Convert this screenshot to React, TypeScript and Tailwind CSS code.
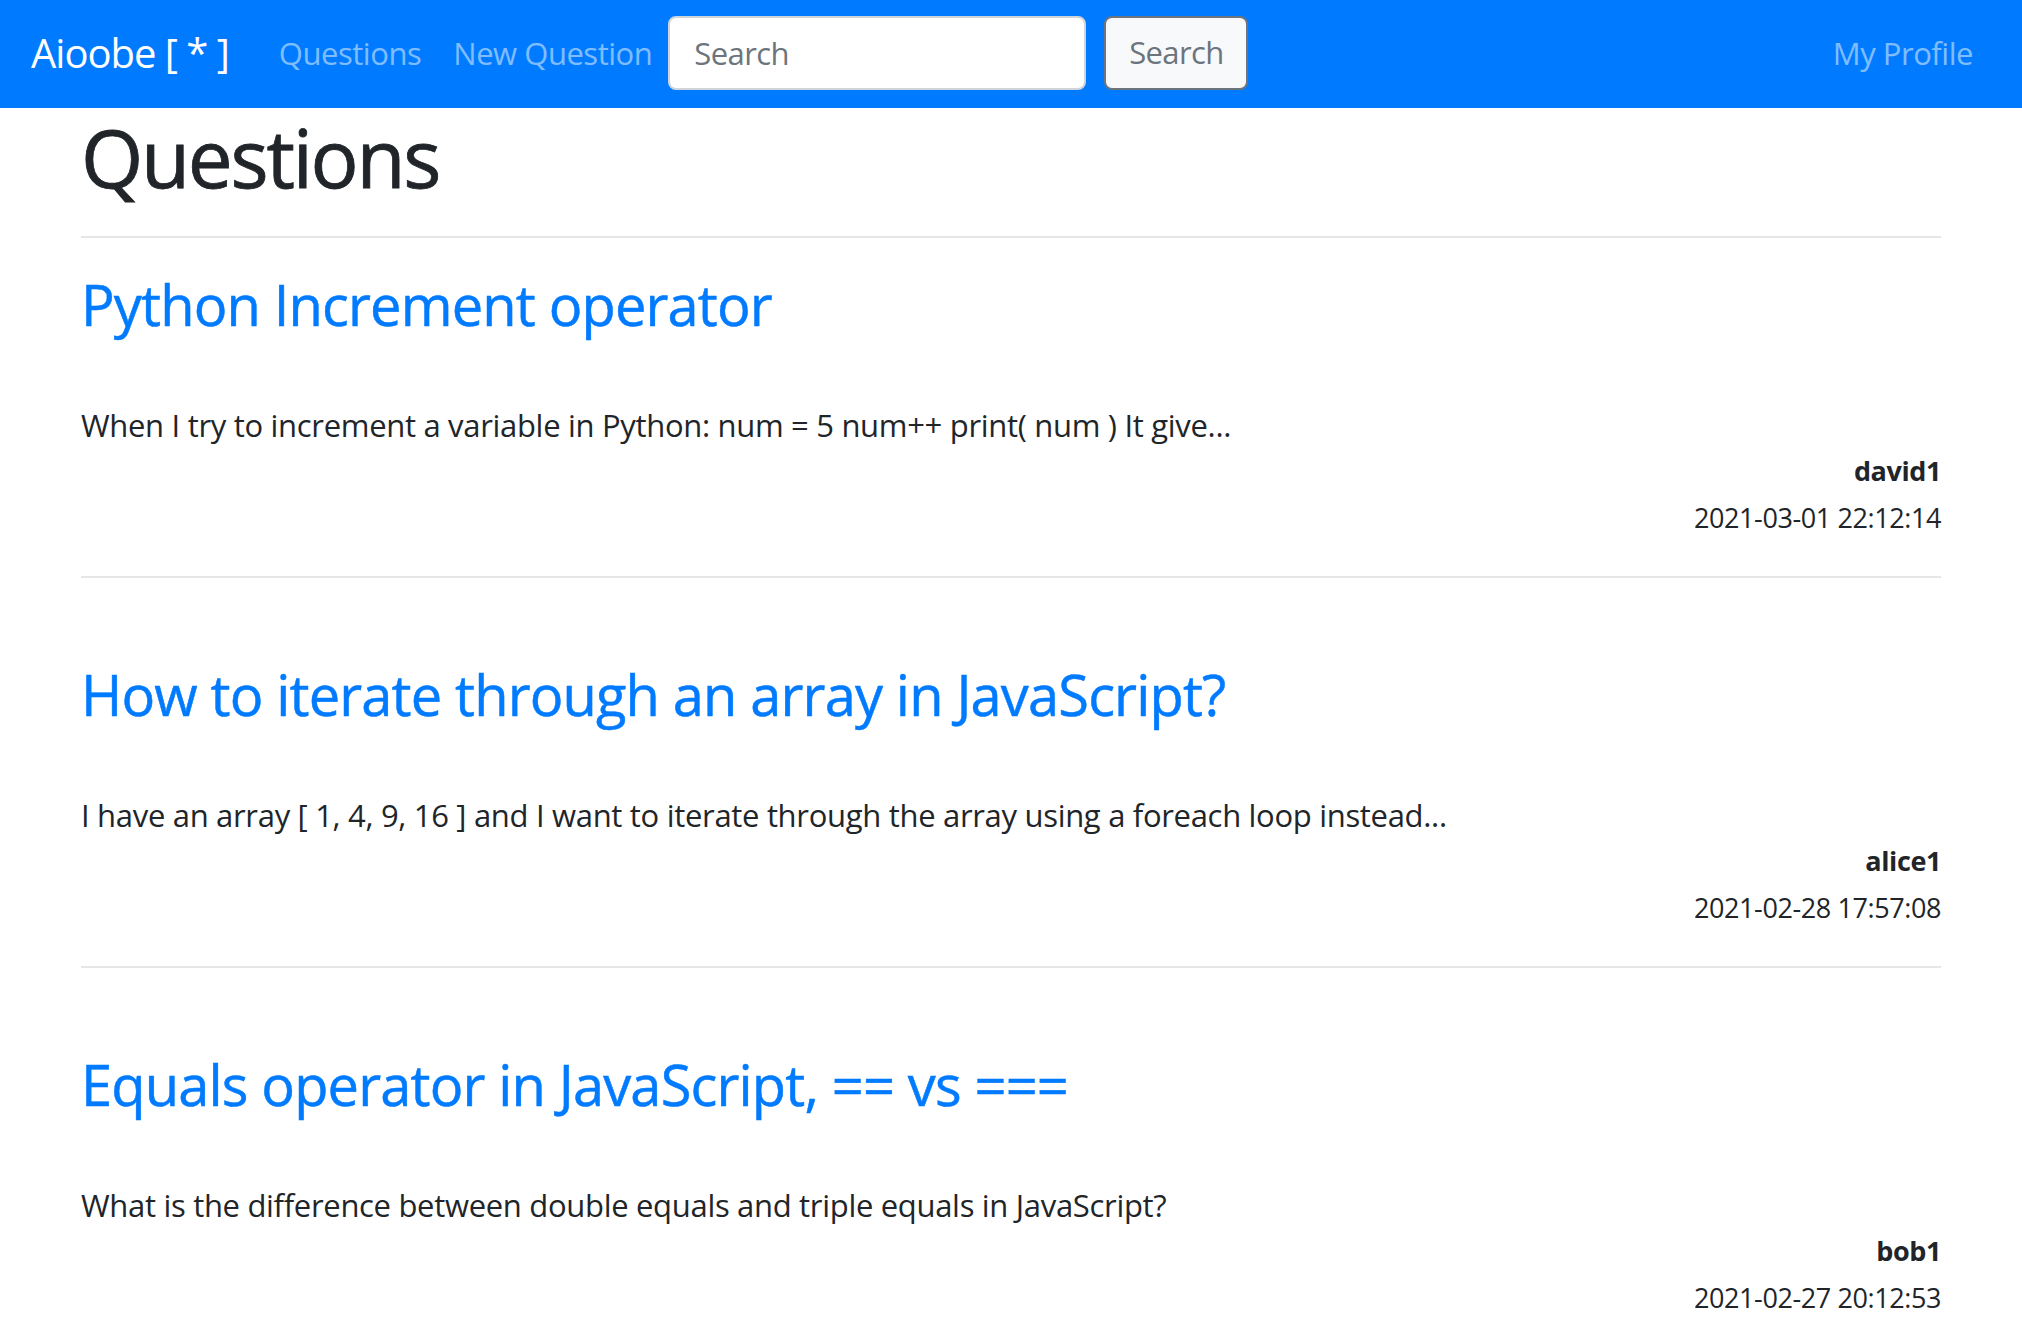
import React from "react";

type Question = {
  title: string;
  excerpt: string;
  author: string;
  date: string;
};

const questions: Question[] = [
  {
    title: "Python Increment operator",
    excerpt:
      "When I try to increment a variable in Python: num = 5 num++ print( num ) It give...",
    author: "david1",
    date: "2021-03-01 22:12:14",
  },
  {
    title: "How to iterate through an array in JavaScript?",
    excerpt:
      "I have an array [ 1, 4, 9, 16 ] and I want to iterate through the array using a foreach loop instead...",
    author: "alice1",
    date: "2021-02-28 17:57:08",
  },
  {
    title: "Equals operator in JavaScript, == vs ===",
    excerpt: "What is the difference between double equals and triple equals in JavaScript?",
    author: "bob1",
    date: "2021-02-27 20:12:53",
  },
];

function Navbar() {
  return (
    <nav className="flex h-[108px] items-center bg-[#007bff] pb-[3px] pl-[31px] pr-[33px]">
      <a href="#" className="mr-[34px] text-[40px] leading-[60px] tracking-[-0.025em] text-white">
        Aioobe [ * ]
      </a>
      <a href="#" className="px-[16px] text-[31px] leading-[48px] tracking-[-0.015em] text-white/50">
        Questions
      </a>
      <a href="#" className="px-[16px] text-[31px] leading-[48px] tracking-[-0.015em] text-white/50">
        New Question
      </a>
      <form className="flex items-center" onSubmit={(e) => e.preventDefault()}>
        <input
          type="search"
          placeholder="Search"
          className="h-[74px] w-[418px] rounded-[8px] border-2 border-[#ced4da] bg-white px-[24px] text-[31px] tracking-[-0.02em] text-[#495057] outline-none placeholder:text-[#6c757d]"
        />
        <button
          type="submit"
          className="ml-[18px] h-[74px] w-[144px] rounded-[8px] border-2 border-[#6c757d] bg-[#f8f9fa] text-[31px] tracking-[-0.02em] text-[#6c757d]"
        >
          Search
        </button>
      </form>
      <a href="#" className="ml-auto px-[16px] text-[31px] leading-[48px] tracking-[-0.015em] text-white/50">
        My Profile
      </a>
    </nav>
  );
}

function QuestionItem({ q, first }: { q: Question; first: boolean }) {
  return (
    <div className={first ? "pt-[32px]" : "pt-[82px]"}>
      <a
        href="#"
        className="block text-[56px] leading-[68px] tracking-[-0.015em] text-[#007bff] [-webkit-text-stroke:0.5px_#007bff]"
      >
        {q.title}
      </a>
      <p className="mt-[63px] text-[31px] leading-[48px] tracking-[-0.01em]">{q.excerpt}</p>
      <div className="text-right text-[27px] leading-[44px] tracking-[-0.015em]">
        <div className="font-bold">{q.author}</div>
        <div className="mt-[3px]">{q.date}</div>
      </div>
      <hr className="mt-[36px] border-t-2 border-[#e6e6e6]" />
    </div>
  );
}

export default function App() {
  return (
    <div className="min-h-[1340px] bg-white font-['Open_Sans',sans-serif] text-[#212529]">
      <Navbar />
      <main className="px-[81px]">
        <h1 className="mt-[1px] text-[80px] leading-[96px] tracking-[-0.028em] [-webkit-text-stroke:0.8px_#212529]">
          Questions
        </h1>
        <hr className="mt-[31px] border-t-2 border-[#e6e6e6]" />
        {questions.map((q, i) => (
          <QuestionItem key={q.title} q={q} first={i === 0} />
        ))}
      </main>
    </div>
  );
}
